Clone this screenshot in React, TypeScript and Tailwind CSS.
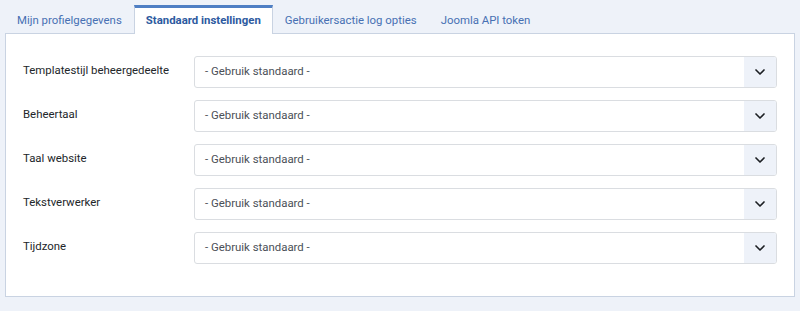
import { ChevronDown } from 'lucide-react'

const tabs = [
  'Mijn profielgegevens',
  'Standaard instellingen',
  'Gebruikersactie log opties',
  'Joomla API token',
]

const fields = [
  'Templatestijl beheergedeelte',
  'Beheertaal',
  'Taal website',
  'Tekstverwerker',
  'Tijdzone',
]

export default function App() {
  const active = 1

  return (
    <div
      className="h-[311px] w-[800px] bg-[#eef2f9] px-[5px] pt-[5px] text-[11.4px]"
      style={{ fontFamily: 'Roboto, "Liberation Sans", sans-serif' }}
    >
      {/* Tabs */}
      <div className="flex h-[28px] items-stretch">
        {tabs.map((tab, index) =>
          index === active ? (
            <div
              key={tab}
              className="relative z-10 -mb-px flex items-center border-x border-t-[3px] border-x-[#c9d3e2] border-t-[#4f7fc4] bg-white px-[11px] pb-[1px] font-bold text-[#2d5aa0]"
            >
              {tab}
            </div>
          ) : (
            <div
              key={tab}
              className="flex items-center px-[12px] pt-[3px] text-[#4770b3]"
            >
              {tab}
            </div>
          )
        )}
      </div>

      {/* Panel */}
      <div className="h-[264px] border border-[#c9d3e2] bg-white px-[17px] pt-[22px]">
        <div className="flex flex-col gap-[12px]">
          {fields.map((field) => (
            <div key={field} className="flex items-start">
              <label className="w-[171px] pt-[6px] text-[#22262a]">
                {field}
              </label>
              <div className="flex h-[32px] flex-1 overflow-hidden rounded-[3px] border border-[#dadde1]">
                <div className="flex flex-1 items-center pl-[10px] text-[#4b5057]">
                  - Gebruik standaard -
                </div>
                <div className="flex w-[32px] items-center justify-center bg-[#eef2f9]">
                  <ChevronDown size={16} strokeWidth={2.5} className="text-[#1c1f23]" />
                </div>
              </div>
            </div>
          ))}
        </div>
      </div>
    </div>
  )
}
